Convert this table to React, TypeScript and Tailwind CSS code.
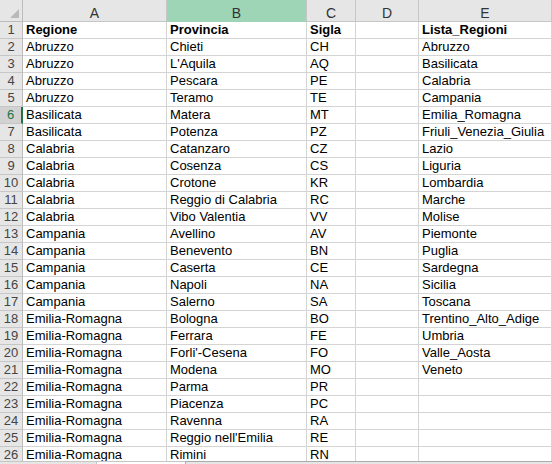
import React from "react";

const rows: [string, string, string, string][] = [
  ["Abruzzo", "Chieti", "CH", "Abruzzo"],
  ["Abruzzo", "L'Aquila", "AQ", "Basilicata"],
  ["Abruzzo", "Pescara", "PE", "Calabria"],
  ["Abruzzo", "Teramo", "TE", "Campania"],
  ["Basilicata", "Matera", "MT", "Emilia_Romagna"],
  ["Basilicata", "Potenza", "PZ", "Friuli_Venezia_Giulia"],
  ["Calabria", "Catanzaro", "CZ", "Lazio"],
  ["Calabria", "Cosenza", "CS", "Liguria"],
  ["Calabria", "Crotone", "KR", "Lombardia"],
  ["Calabria", "Reggio di Calabria", "RC", "Marche"],
  ["Calabria", "Vibo Valentia", "VV", "Molise"],
  ["Campania", "Avellino", "AV", "Piemonte"],
  ["Campania", "Benevento", "BN", "Puglia"],
  ["Campania", "Caserta", "CE", "Sardegna"],
  ["Campania", "Napoli", "NA", "Sicilia"],
  ["Campania", "Salerno", "SA", "Toscana"],
  ["Emilia-Romagna", "Bologna", "BO", "Trentino_Alto_Adige"],
  ["Emilia-Romagna", "Ferrara", "FE", "Umbria"],
  ["Emilia-Romagna", "Forli'-Cesena", "FO", "Valle_Aosta"],
  ["Emilia-Romagna", "Modena", "MO", "Veneto"],
  ["Emilia-Romagna", "Parma", "PR", ""],
  ["Emilia-Romagna", "Piacenza", "PC", ""],
  ["Emilia-Romagna", "Ravenna", "RA", ""],
  ["Emilia-Romagna", "Reggio nell'Emilia", "RE", ""],
  ["Emilia-Romagna", "Rimini", "RN", ""],
];

const cols = "grid grid-cols-[23px_144px_140px_49px_63px_1fr]";

function Cell({ children, bold }: { children?: React.ReactNode; bold?: boolean }) {
  return (
    <div
      className={
        "h-[17px] border-r border-b border-[#d4d4d4] pl-[3px] text-[13px] leading-[16px] text-black whitespace-nowrap overflow-hidden " +
        (bold ? "font-bold" : "")
      }
    >
      {children}
    </div>
  );
}

function RowHead({ n, active }: { n: number; active?: boolean }) {
  return (
    <div
      className={
        "h-[17px] border-b border-[#c6c6c6] text-center text-[13px] leading-[16px] " +
        (active
          ? "bg-[#d2d2d2] text-[#217346] border-r-2 border-r-[#217346]"
          : "bg-[#e6e6e6] text-[#444444] border-r border-r-[#bcbcbc]")
      }
    >
      {n}
    </div>
  );
}

export default function App() {
  const letters = ["A", "B", "C", "D", "E"];
  return (
    <div className="w-[552px] h-[464px] overflow-hidden bg-white flex flex-col font-['Liberation_Sans',Arial,sans-serif]">
      <div className="h-[461px] overflow-hidden">
        <div className={cols}>
          <div className="h-[22px] bg-[#e6e6e6] border-r border-b border-[#bcbcbc] relative">
            <svg width="22" height="21" className="block">
              <polygon points="19,9 19,18 10,18" fill="#b9b9b9" />
            </svg>
          </div>
          {letters.map((l) => (
            <div
              key={l}
              className={
                "h-[22px] border-r border-b text-center text-[14px] leading-[16px] pt-[5px] text-[#333333] " +
                (l === "B"
                  ? "bg-[#9fd5b7] border-r-[#c6c6c6] border-b-[#9fd5b7]"
                  : "bg-[#e6e6e6] border-[#c6c6c6]")
              }
            >
              {l}
            </div>
          ))}

          <RowHead n={1} />
          <Cell bold>Regione</Cell>
          <Cell bold>Provincia</Cell>
          <Cell bold>Sigla</Cell>
          <Cell />
          <Cell bold>Lista_Regioni</Cell>

          {rows.map((r, i) => (
            <React.Fragment key={i}>
              <RowHead n={i + 2} active={i + 2 === 6} />
              <Cell>{r[0]}</Cell>
              <Cell>{r[1]}</Cell>
              <Cell>{r[2]}</Cell>
              <Cell />
              <Cell>{r[3]}</Cell>
            </React.Fragment>
          ))}
        </div>
      </div>
      <div className="h-[3px] flex">
        <div className="w-[97px] bg-[#e6e6e6] border-t border-r border-[#c6c6c6]" />
        <div className="w-[88px] bg-white border-t border-[#c6c6c6]" />
        <div className="flex-1 bg-[#e6e6e6] border-t border-l border-[#ababab]" />
      </div>
    </div>
  );
}
